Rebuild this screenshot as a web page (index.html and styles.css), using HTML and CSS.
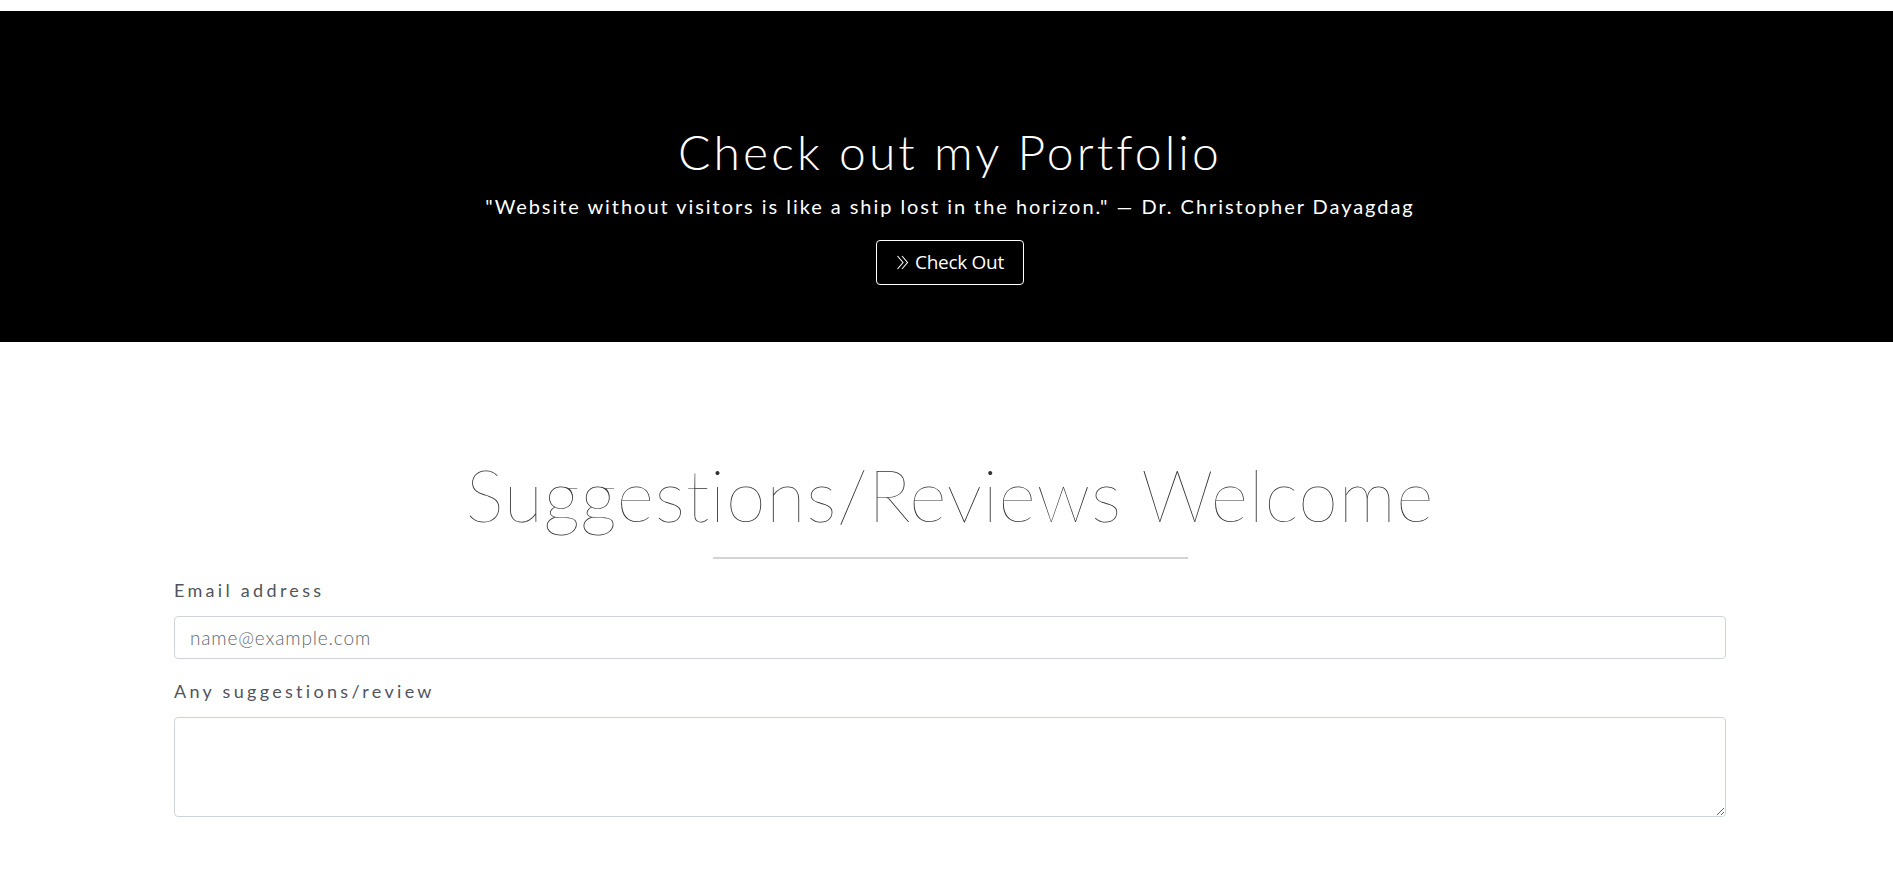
FILE: index.html
```html
<!DOCTYPE html>
<html lang="en">
<head>
<meta charset="utf-8">
<title>Portfolio</title>
<link rel="stylesheet" href="styles.css">
</head>
<body>
<section class="hero">
  <h1 class="hero-title">Check out my Portfolio</h1>
  <p class="hero-quote">"Website without visitors is like a ship lost in the horizon." — Dr. Christopher Dayagdag</p>
  <a class="hero-btn" href="#">
    <svg class="chev" width="14" height="15" viewBox="0 0 14 15" fill="none" stroke="#fff" stroke-width="1.1">
      <polyline points="1.5,1 7,7.5 1.5,14"/>
      <polyline points="6,1 11.5,7.5 6,14"/>
    </svg>
    <span>Check Out</span>
  </a>
</section>
<section class="feedback">
  <h2 class="feedback-title">Suggestions/Reviews Welcome</h2>
  <div class="rule"></div>
  <form class="form">
    <label class="form-label" for="email">Email address</label>
    <input class="form-input" id="email" type="email" placeholder="name@example.com">
    <label class="form-label second" for="msg">Any suggestions/review</label>
    <textarea class="form-area" id="msg"></textarea>
  </form>
</section>
</body>
</html>
```
FILE: styles.css
```css
* { box-sizing: border-box; }
html, body { margin: 0; padding: 0; background: #fff; }
body { padding-top: 11px; font-family: "Lato", "Liberation Sans", sans-serif; }

.hero {
  background: #000;
  height: 331px;
  padding: 112px 0 0 7px;
  display: flex;
  flex-direction: column;
  align-items: center;
  color: #fff;
}
.hero-title {
  margin: 0;
  font-size: 48px;
  line-height: 1.2;
  font-weight: 300;
  letter-spacing: 3.1px;
}
.hero-quote {
  margin: 10px 0 0;
  font-size: 20px;
  line-height: 1.5;
  letter-spacing: 1.95px;
  font-weight: 400;
}
.hero-btn {
  margin-top: 19px;
  width: 148px;
  height: 45px;
  border: 1px solid #fff;
  border-radius: 4px;
  color: #fff;
  text-decoration: none;
  display: flex;
  align-items: center;
  justify-content: center;
  gap: 5px;
  font-family: "Open Sans", sans-serif;
  font-size: 19px;
  letter-spacing: -0.3px;
}
.chev { display: block; }

.feedback {
  padding: 109px 0 0 7px;
  display: flex;
  flex-direction: column;
  align-items: center;
}
.feedback-title {
  margin: 0;
  font-size: 72px;
  line-height: 1.2;
  font-weight: 100;
  color: #333;
  letter-spacing: 0.8px;
}
.rule {
  margin-top: 20px;
  width: 475px;
  height: 2px;
  background: #d3d3d3;
}
.form {
  align-self: stretch;
  margin: 18px 167px 0;
  display: flex;
  flex-direction: column;
}
.form-label {
  font-size: 18px;
  line-height: 27px;
  letter-spacing: 3.3px;
  color: #50555d;
}
.form-label.second { margin-top: 19px; }
.form-input, .form-area {
  margin-top: 12px;
  border: 1px solid #ced4da;
  border-radius: 4px;
  font-family: "Lato", sans-serif;
  font-size: 19px;
  font-weight: 300;
  padding: 0 15px;
  color: #495057;
  background: #fff;
}
.form-input { height: 43px; }
.form-input::placeholder { color: #62686f; letter-spacing: 0.85px; }
.form-area { height: 100px; resize: vertical; padding-top: 8px; }
```
